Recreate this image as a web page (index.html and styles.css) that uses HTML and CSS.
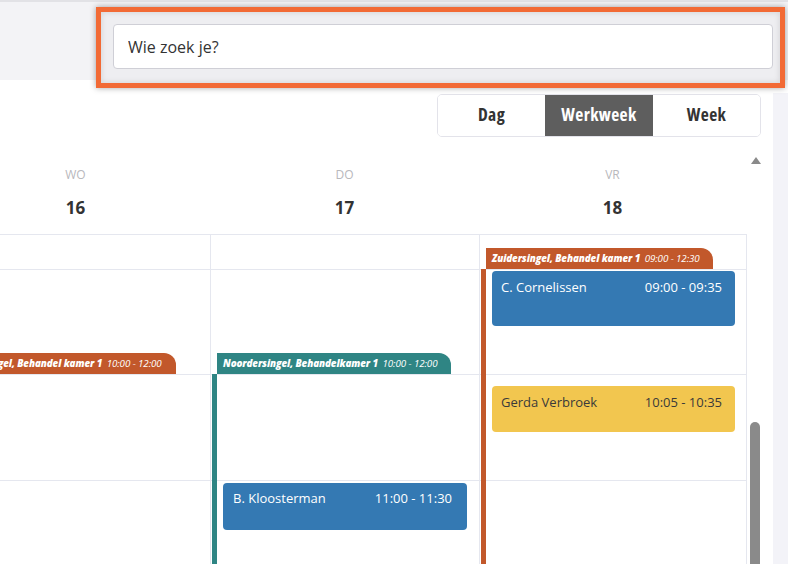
FILE: index.html
```html
<!DOCTYPE html>
<html lang="nl">
<head>
    <meta charset="UTF-8">
    <meta name="viewport" content="width=device-width, initial-scale=1.0">
    <title>Agenda</title>
    <link rel="stylesheet" href="styles.css">
</head>
<body>
    <div class="topbar">
        <div class="search-highlight">
            <input class="search-input" type="text" placeholder="Wie zoek je?">
        </div>
    </div>

    <div class="page">
        <div class="cal">
            <div class="toolbar">
                <div class="view-switch">
                    <button class="view-btn">Dag</button>
                    <button class="view-btn active">Werkweek</button>
                    <button class="view-btn">Week</button>
                </div>
            </div>

            <div class="head">
                <div class="head-days">
                    <div class="head-cell"><div class="day-name">WO</div><div class="day-num">16</div></div>
                    <div class="head-cell"><div class="day-name">DO</div><div class="day-num">17</div></div>
                    <div class="head-cell"><div class="day-name">VR</div><div class="day-num">18</div></div>
                </div>
                <div class="head-scroll"><span class="scroll-up"></span></div>
            </div>

            <div class="body">
                <div class="days">
                    <div class="day">
                        <div class="slot short"></div>
                        <div class="slot"></div>
                        <div class="slot tall"></div>
                        <div class="slot tall"></div>

                        <div class="room-tag orange" style="top: 119px; width: 228px;"><b>Zuidersingel, Behandel kamer 1</b> <span>10:00 - 12:00</span></div>
                    </div>

                    <div class="day">
                        <div class="slot short"></div>
                        <div class="slot"></div>
                        <div class="slot tall"></div>
                        <div class="slot tall"></div>

                        <div class="room-tag teal" style="top: 119px; width: 234px;"><b>Noordersingel, Behandelkamer 1</b> <span>10:00 - 12:00</span></div>
                        <div class="room-bar teal" style="top: 140px;"></div>
                        <div class="event blue" style="top: 249px; height: 47px; left: 12px; width: 244px;">
                            <span>B. Kloosterman</span><span>11:00 - 11:30</span>
                        </div>
                    </div>

                    <div class="day last">
                        <div class="slot short"></div>
                        <div class="slot"></div>
                        <div class="slot tall"></div>
                        <div class="slot tall"></div>

                        <div class="room-tag orange" style="top: 14px; width: 227px;"><b>Zuidersingel, Behandel kamer 1</b> <span>09:00 - 12:30</span></div>
                        <div class="room-bar orange" style="top: 35px;"></div>
                        <div class="event blue" style="top: 37px; height: 55px;">
                            <span>C. Cornelissen</span><span>09:00 - 09:35</span>
                        </div>
                        <div class="event yellow" style="top: 152px; height: 46px;">
                            <span>Gerda Verbroek</span><span>10:05 - 10:35</span>
                        </div>
                    </div>
                </div>
                <div class="scroll-track">
                    <div class="scroll-thumb"></div>
                </div>
            </div>
        </div>
        <div class="side"></div>
    </div>
</body>
</html>
```

FILE: styles.css
```css
body {
    margin: 0;
    font-family: 'Open Sans', 'Noto Sans', sans-serif;
    color: #333;
    background-color: #fff;
    width: 788px;
    height: 564px;
    overflow: hidden;
}

.topbar {
    height: 80px;
    box-sizing: border-box;
    background-color: #f3f3f6;
    border-top: 2px solid #e2e2e6;
    display: flex;
    align-items: flex-start;
    padding-left: 96px;
    padding-right: 3px;
    position: relative;
    z-index: 2;
}

.search-highlight {
    flex: 1;
    height: 81px;
    margin-top: 5px;
    box-sizing: border-box;
    border: 5px solid #f26a35;
    padding: 12px 7px 0 12px;
    background-color: #eeeef1;
    box-shadow: 0 0 6px rgba(0, 0, 0, 0.35), inset 0 0 6px rgba(0, 0, 0, 0.12);
}

.search-input {
    width: 100%;
    height: 45px;
    box-sizing: border-box;
    border: 1px solid #cfcfd6;
    border-radius: 4px;
    background-color: #fff;
    padding: 0 14px;
    font-family: 'Open Sans', sans-serif;
    font-size: 16px;
    color: #333;
    outline: none;
}

.search-input::placeholder {
    color: #333;
}

.page {
    display: flex;
    height: 484px;
}

.cal {
    width: 773px;
    flex-shrink: 0;
    overflow: hidden;
}

.side {
    flex: 1;
    margin-top: 13px;
    background-color: #f3f3f8;
}

/* view switch */
.toolbar {
    display: flex;
    justify-content: flex-end;
    padding: 14px 12px 0 0;
}

.view-switch {
    display: flex;
    border: 1px solid #e3e3ea;
    border-radius: 5px;
    overflow: hidden;
    height: 43px;
    box-sizing: border-box;
}

.view-btn {
    width: 107px;
    border: none;
    background-color: #fff;
    font-family: 'Open Sans', sans-serif;
    font-stretch: 87.5%;
    font-weight: bold;
    font-size: 17.5px;
    letter-spacing: 0.4px;
    color: #333;
    padding: 0 0 3px 0;
    cursor: pointer;
}

.view-btn.active {
    background-color: #5e5e5e;
    color: #fff;
    width: 108px;
}

/* header */
.head {
    display: flex;
    height: 97px;
}

.head-days {
    display: grid;
    grid-template-columns: 269px 269px 268px;
    margin-left: -59px;
    flex-shrink: 0;
}

.head-cell {
    text-align: center;
    padding-top: 30px;
}

.head-cell:last-child {
    padding-right: 1px;
}

.day-name {
    font-size: 12px;
    line-height: 16px;
    color: #b8b8bc;
}

.day-num {
    margin-top: 13px;
    font-size: 17px;
    line-height: 24px;
    font-weight: bold;
    color: #333;
}

.head-scroll {
    flex: 1;
    padding: 20px 0 0 4px;
}

.scroll-up {
    display: block;
    width: 0;
    height: 0;
    border-left: 5px solid transparent;
    border-right: 5px solid transparent;
    border-bottom: 7px solid #8a8a8a;
}

/* body grid */
.body {
    display: flex;
    height: 330px;
}

.days {
    display: grid;
    grid-template-columns: 269px 269px 268px;
    margin-left: -59px;
    flex-shrink: 0;
}

.day {
    position: relative;
    border-left: 1px solid #e5e7ef;
}

.day.last {
    border-right: 1px solid #e5e7ef;
}

.slot {
    height: 105px;
    border-top: 1px solid #e5e7ef;
    box-sizing: border-box;
}

.slot.short {
    height: 35px;
}

.slot.tall {
    height: 106px;
}

.room-tag {
    position: absolute;
    left: 6px;
    height: 21px;
    box-sizing: border-box;
    padding-left: 6px;
    border-radius: 0 12px 0 0;
    color: #fff;
    font-size: 9.8px;
    line-height: 22px;
    font-style: italic;
    letter-spacing: -0.1px;
    white-space: nowrap;
    overflow: hidden;
}

.room-tag b {
    font-weight: 800;
}

.room-tag span {
    margin-left: 2px;
}

.room-bar {
    position: absolute;
    left: 1px;
    bottom: 0;
    width: 5px;
}

.orange {
    background-color: #c2582b;
}

.teal {
    background-color: #2f8584;
}

.event {
    position: absolute;
    left: 12px;
    width: 243px;
    box-sizing: border-box;
    border-radius: 4px;
    padding: 7px 13px 0 9px;
    display: flex;
    justify-content: space-between;
    font-size: 13px;
    line-height: 18px;
}

.event.blue {
    background-color: #3479b3;
    color: #fff;
}

.event.yellow {
    background-color: #f2c64f;
    color: #3a3a3a;
}

.day:nth-child(2) .event {
    padding: 6px 15px 0 10px;
}

.scroll-track {
    flex: 1;
    padding-left: 3px;
    padding-top: 188px;
}

.scroll-thumb {
    width: 10px;
    height: 200px;
    background-color: #8a8a8a;
    border-radius: 5px 5px 0 0;
}
```
